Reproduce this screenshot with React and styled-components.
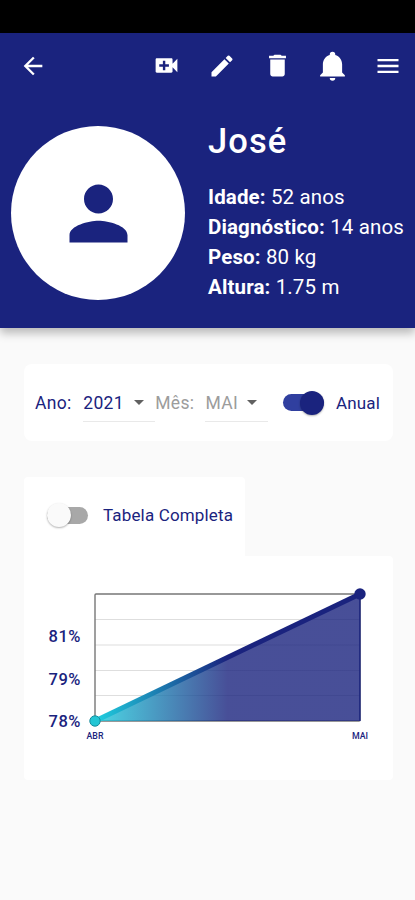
import React from "react";
import styled, { createGlobalStyle } from "styled-components";

const NAVY = "#1a237e";

const GlobalStyle = createGlobalStyle`
  * {
    box-sizing: border-box;
  }
  body {
    margin: 0;
    background: #fafafa;
    font-family: Roboto, sans-serif;
    color: ${NAVY};
  }
`;

const Screen = styled.div`
  width: 415px;
  height: 900px;
  overflow: hidden;
`;

const StatusBar = styled.div`
  height: 33px;
  background: #000;
`;

const Header = styled.header`
  height: 295px;
  background: ${NAVY};
  color: #fff;
  box-shadow: 0 5px 9px rgba(0, 0, 0, 0.27);
`;

const Toolbar = styled.div`
  display: flex;
  align-items: center;
  height: 65px;
  padding: 0 13px 0 19px;
`;

const Actions = styled.div`
  display: grid;
  grid-template-columns: repeat(5, 55.3px);
  justify-items: center;
  align-items: center;
  margin: 0 -13.5px 0 auto;
`;

const Icon = styled.svg`
  display: block;
  width: ${(props) => props.$size}px;
  height: ${(props) => props.$size}px;
  fill: currentColor;
`;

const Profile = styled.div`
  display: flex;
  padding: 28px 0 0 11px;
`;

const Avatar = styled.div`
  display: flex;
  align-items: center;
  justify-content: center;
  flex: none;
  width: 174px;
  height: 174px;
  border-radius: 50%;
  background: #fff;
  color: ${NAVY};
`;

const Details = styled.div`
  margin-left: 23px;
  white-space: nowrap;
`;

const Name = styled.h1`
  margin: -3px 0 23px;
  font-size: 34.5px;
  line-height: 36px;
  font-weight: 500;
  letter-spacing: 1.1px;
`;

const Info = styled.p`
  margin: 0;
  font-size: 20.5px;
  line-height: 30px;
  letter-spacing: 0.13px;
`;

const Filters = styled.section`
  display: flex;
  align-items: center;
  width: 369px;
  height: 77px;
  margin: 36px 0 0 24px;
  padding-left: 11px;
  border-radius: 8px;
  background: #fff;
`;

const Label = styled.span`
  font-size: ${(props) => props.$size || 17.5}px;
  line-height: 24px;
  letter-spacing: ${(props) => props.$spacing ?? 0.35}px;
  color: ${(props) => (props.$disabled ? "#9c9c9c" : NAVY)};
  white-space: nowrap;
`;

const Select = styled.div`
  display: flex;
  align-items: center;
  justify-content: space-between;
  width: ${(props) => props.$width}px;
  height: 38px;
  margin-left: ${(props) => props.$gap}px;
  padding-right: 11px;
  border-bottom: 1px solid #e9e9e9;
`;

const SelectValue = styled(Label)`
  margin-top: 1px;
`;

const Caret = styled.span`
  margin-top: 1px;
  border: 5.5px solid transparent;
  border-top-color: #616161;
  border-bottom: 0;
`;

const SwitchTrack = styled.div`
  display: flex;
  align-items: center;
  justify-content: ${(props) => (props.$on ? "flex-end" : "flex-start")};
  flex: none;
  width: 41px;
  height: 17px;
  border-radius: 9px;
  background: ${(props) => (props.$on ? "#303f9f" : "#a8a8a8")};
`;

const SwitchThumb = styled.div`
  flex: none;
  width: 24px;
  height: 24px;
  border-radius: 50%;
  background: ${(props) => (props.$on ? NAVY : "#fafafa")};
  box-shadow: 0 1px 2px rgba(0, 0, 0, 0.3);
`;

const SwitchField = styled.label`
  display: flex;
  align-items: center;
  gap: ${(props) => props.$gap}px;
  margin-left: ${(props) => props.$offset || 0}px;
`;

const TableTab = styled.div`
  display: flex;
  width: 221px;
  height: 79px;
  margin: 36px 0 0 24px;
  padding: 0 0 3px 23px;
  border-radius: 4px 4px 0 0;
  background: #fff;
`;

const ChartCard = styled.section`
  width: 369px;
  height: 224px;
  margin-left: 24px;
  border-radius: 0 4px 4px 4px;
  background: #fff;
`;

const Chart = styled.svg`
  display: block;
  font-family: Roboto, sans-serif;
`;

const ICONS = {
  back: "M20 11H7.83l5.59-5.59L12 4l-8 8 8 8 1.41-1.41L7.83 13H20v-2z",
  video:
    "M17 10.5V7c0-.55-.45-1-1-1H4c-.55 0-1 .45-1 1v10c0 .55.45 1 1 1h12c.55 0 1-.45 1-1v-3.5l4 4v-11l-4 4zM14 13h-3v3H9v-3H6v-2h3V8h2v3h3v2z",
  edit: "M3 17.25V21h3.75L17.81 9.94l-3.75-3.75L3 17.25zM20.71 7.04a1 1 0 0 0 0-1.41l-2.34-2.34a1 1 0 0 0-1.41 0l-1.83 1.83 3.75 3.75 1.83-1.83z",
  trash: "M6 19c0 1.1.9 2 2 2h8c1.1 0 2-.9 2-2V7H6v12zM19 4h-3.5l-1-1h-5l-1 1H5v2h14V4z",
  bell: "M21 19v1H3v-1l2-2v-6c0-3.1 2.03-5.83 5-6.71V4a2 2 0 0 1 4 0v.29c2.97.88 5 3.61 5 6.71v6l2 2zM14 21a2 2 0 0 1-4 0h4z",
  menu: "M3 18h18v-2H3v2zm0-5h18v-2H3v2zm0-7v2h18V6H3z",
  person:
    "M12 12c2.21 0 4-1.79 4-4s-1.79-4-4-4-4 1.79-4 4 1.79 4 4 4zm0 2c-2.67 0-8 1.34-8 4v2h16v-2c0-2.66-5.33-4-8-4z",
};

const info = [
  { label: "Idade", value: "52 anos" },
  { label: "Diagnóstico", value: "14 anos" },
  { label: "Peso", value: "80 kg" },
  { label: "Altura", value: "1.75 m" },
];

const MaterialIcon = ({ name, size }) => (
  <Icon $size={size} viewBox="0 0 24 24">
    <path d={ICONS[name]} />
  </Icon>
);

const Switch = ({ on }) => (
  <SwitchTrack $on={on}>
    <SwitchThumb $on={on} />
  </SwitchTrack>
);

const EvolutionChart = () => (
  <Chart width="369" height="224" viewBox="0 0 369 224">
    <defs>
      <linearGradient id="area" gradientUnits="userSpaceOnUse" x1="71" y1="0" x2="336" y2="0">
        <stop offset="0" stopColor="#1fcfdf" />
        <stop offset="0.5" stopColor={NAVY} />
      </linearGradient>
    </defs>
    {[63.5, 89, 114.5, 139.5].map((y) => (
      <path key={y} d={`M71 ${y}H336`} stroke="#dedede" strokeWidth="1.2" />
    ))}
    <rect x="71" y="38" width="265" height="127" rx="1" fill="none" stroke="#777" strokeWidth="1.4" />
    <path d="M71 165L336 38V165Z" fill="url(#area)" fillOpacity="0.8" />
    <path d="M336 38V165" stroke={NAVY} strokeWidth="1.3" />
    <path d="M71 165L336 38" stroke="url(#area)" strokeWidth="5" />
    <circle cx="71" cy="165" r="5.2" fill="#23c6d4" stroke="#178c9c" strokeWidth="1" />
    <circle cx="336" cy="38" r="5.7" fill={NAVY} />
    <g fill={NAVY} fontSize="16.5" fontWeight="500" textAnchor="end">
      <text x="56.5" y="86" textLength="32">81%</text>
      <text x="56.5" y="128.5" textLength="32">79%</text>
      <text x="56.5" y="171" textLength="32">78%</text>
    </g>
    <g fill={NAVY} fontSize="8.8" fontWeight="500" textAnchor="middle">
      <text x="71" y="182.5">ABR</text>
      <text x="336" y="182.5">MAI</text>
    </g>
  </Chart>
);

const App = () => (
  <>
    <GlobalStyle />
    <Screen>
      <StatusBar />
      <Header>
        <Toolbar>
          <MaterialIcon name="back" size={28} />
          <Actions>
            <MaterialIcon name="video" size={29} />
            <MaterialIcon name="edit" size={28} />
            <MaterialIcon name="trash" size={29} />
            <MaterialIcon name="bell" size={33} />
            <MaterialIcon name="menu" size={28} />
          </Actions>
        </Toolbar>
        <Profile>
          <Avatar>
            <MaterialIcon name="person" size={87} />
          </Avatar>
          <Details>
            <Name>José</Name>
            {info.map((item) => (
              <Info key={item.label}>
                <strong>{item.label}:</strong> {item.value}
              </Info>
            ))}
          </Details>
        </Profile>
      </Header>

      <Filters>
        <Label>Ano:</Label>
        <Select $width={72} $gap={11.5}>
          <SelectValue>2021</SelectValue>
          <Caret />
        </Select>
        <Label $disabled>Mês:</Label>
        <Select $width={62.5} $gap={11}>
          <SelectValue $disabled>MAI</SelectValue>
          <Caret />
        </Select>
        <SwitchField $gap={12} $offset={15}>
          <Switch on />
          <Label $size={17} $spacing={0.15}>Anual</Label>
        </SwitchField>
      </Filters>

      <TableTab>
        <SwitchField $gap={15}>
          <Switch />
          <Label $size={17} $spacing={0.15}>Tabela Completa</Label>
        </SwitchField>
      </TableTab>
      <ChartCard>
        <EvolutionChart />
      </ChartCard>
    </Screen>
  </>
);

export default App;
